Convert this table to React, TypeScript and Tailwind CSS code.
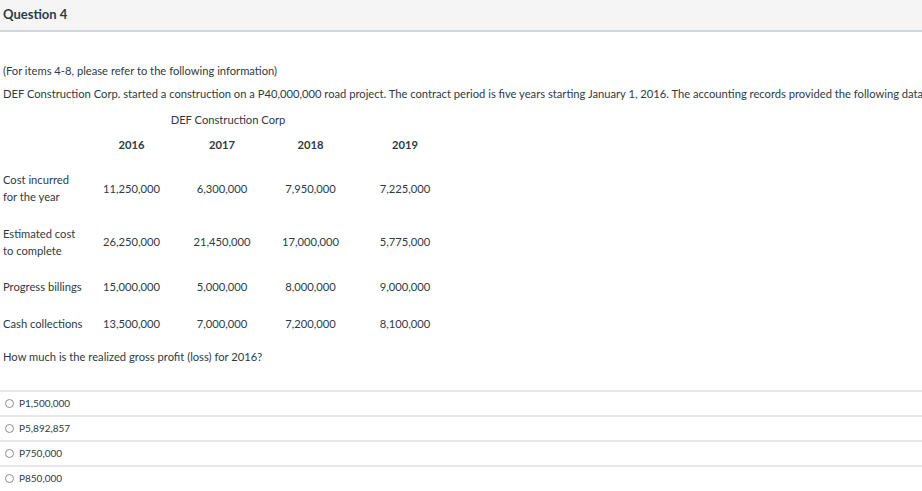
const ROWS = [
  { label: ['Cost incurred', 'for the year'], values: ['11,250,000', '6,300,000', '7,950,000', '7,225,000'] },
  { label: ['Estimated cost', 'to complete'], values: ['26,250,000', '21,450,000', '17,000,000', '5,775,000'] },
  { label: ['Progress billings'], values: ['15,000,000', '5,000,000', '8,000,000', '9,000,000'] },
  { label: ['Cash collections'], values: ['13,500,000', '7,000,000', '7,200,000', '8,100,000'] },
];

const YEARS = ['2016', '2017', '2018', '2019'];

const OPTIONS = ['P1,500,000', 'P5,892,857', 'P750,000', 'P850,000'];

const GRID = 'grid grid-cols-[97px_63px_118px_59px_130px] items-center';

export default function App() {
  return (
    <div className="min-h-screen bg-white text-[#2d3b45] font-['Lato','Noto_Sans',sans-serif] overflow-hidden">
      {/* Header */}
      <div className="h-[32px] bg-[#f5f5f5] border-b-2 border-[#d3d6d8] px-[3px] flex items-center">
        <h2 className="text-[13px] font-bold">Question 4</h2>
      </div>

      <div className="px-[3px] pt-[30px] text-[11.2px] leading-[17px]">
        <p>(For items 4-8, please refer to the following information)</p>
        <p className="mt-[6px] whitespace-nowrap">
          DEF Construction Corp. started a construction on a P40,000,000 road project. The contract period is five years starting January 1, 2016. The accounting records provided the following data:
        </p>

        {/* Data table */}
        <div className="w-[467px]">
          <p className="mt-[9px] w-[450px] text-center">DEF Construction Corp</p>
          <div className={`${GRID} mt-[8px] pb-[8.5px] font-bold`}>
            <span />
            {YEARS.map((y) => (
              <span key={y} className="text-center">{y}</span>
            ))}
          </div>
          {ROWS.map((r) => (
            <div key={r.label[0]} className={`${GRID} py-[9.75px]`}>
              <span className="whitespace-nowrap">
                {r.label.map((l) => (
                  <span key={l} className="block">{l}</span>
                ))}
              </span>
              {r.values.map((v, i) => (
                <span key={i} className="text-center">{v}</span>
              ))}
            </div>
          ))}
        </div>

        <p className="mt-[6px]">How much is the realized gross profit (loss) for 2016?</p>
      </div>

      {/* Answers */}
      <div className="mt-[25px] text-[10px]">
        {OPTIONS.map((o) => (
          <label key={o} className="h-[25px] border-t-2 border-[#e8e8e8] flex items-center gap-[5px]">
            <span className="ml-[5px] w-[9px] h-[9px] rounded-full border border-[#8c8c8c] bg-white" />
            <span>{o}</span>
          </label>
        ))}
      </div>
    </div>
  );
}
